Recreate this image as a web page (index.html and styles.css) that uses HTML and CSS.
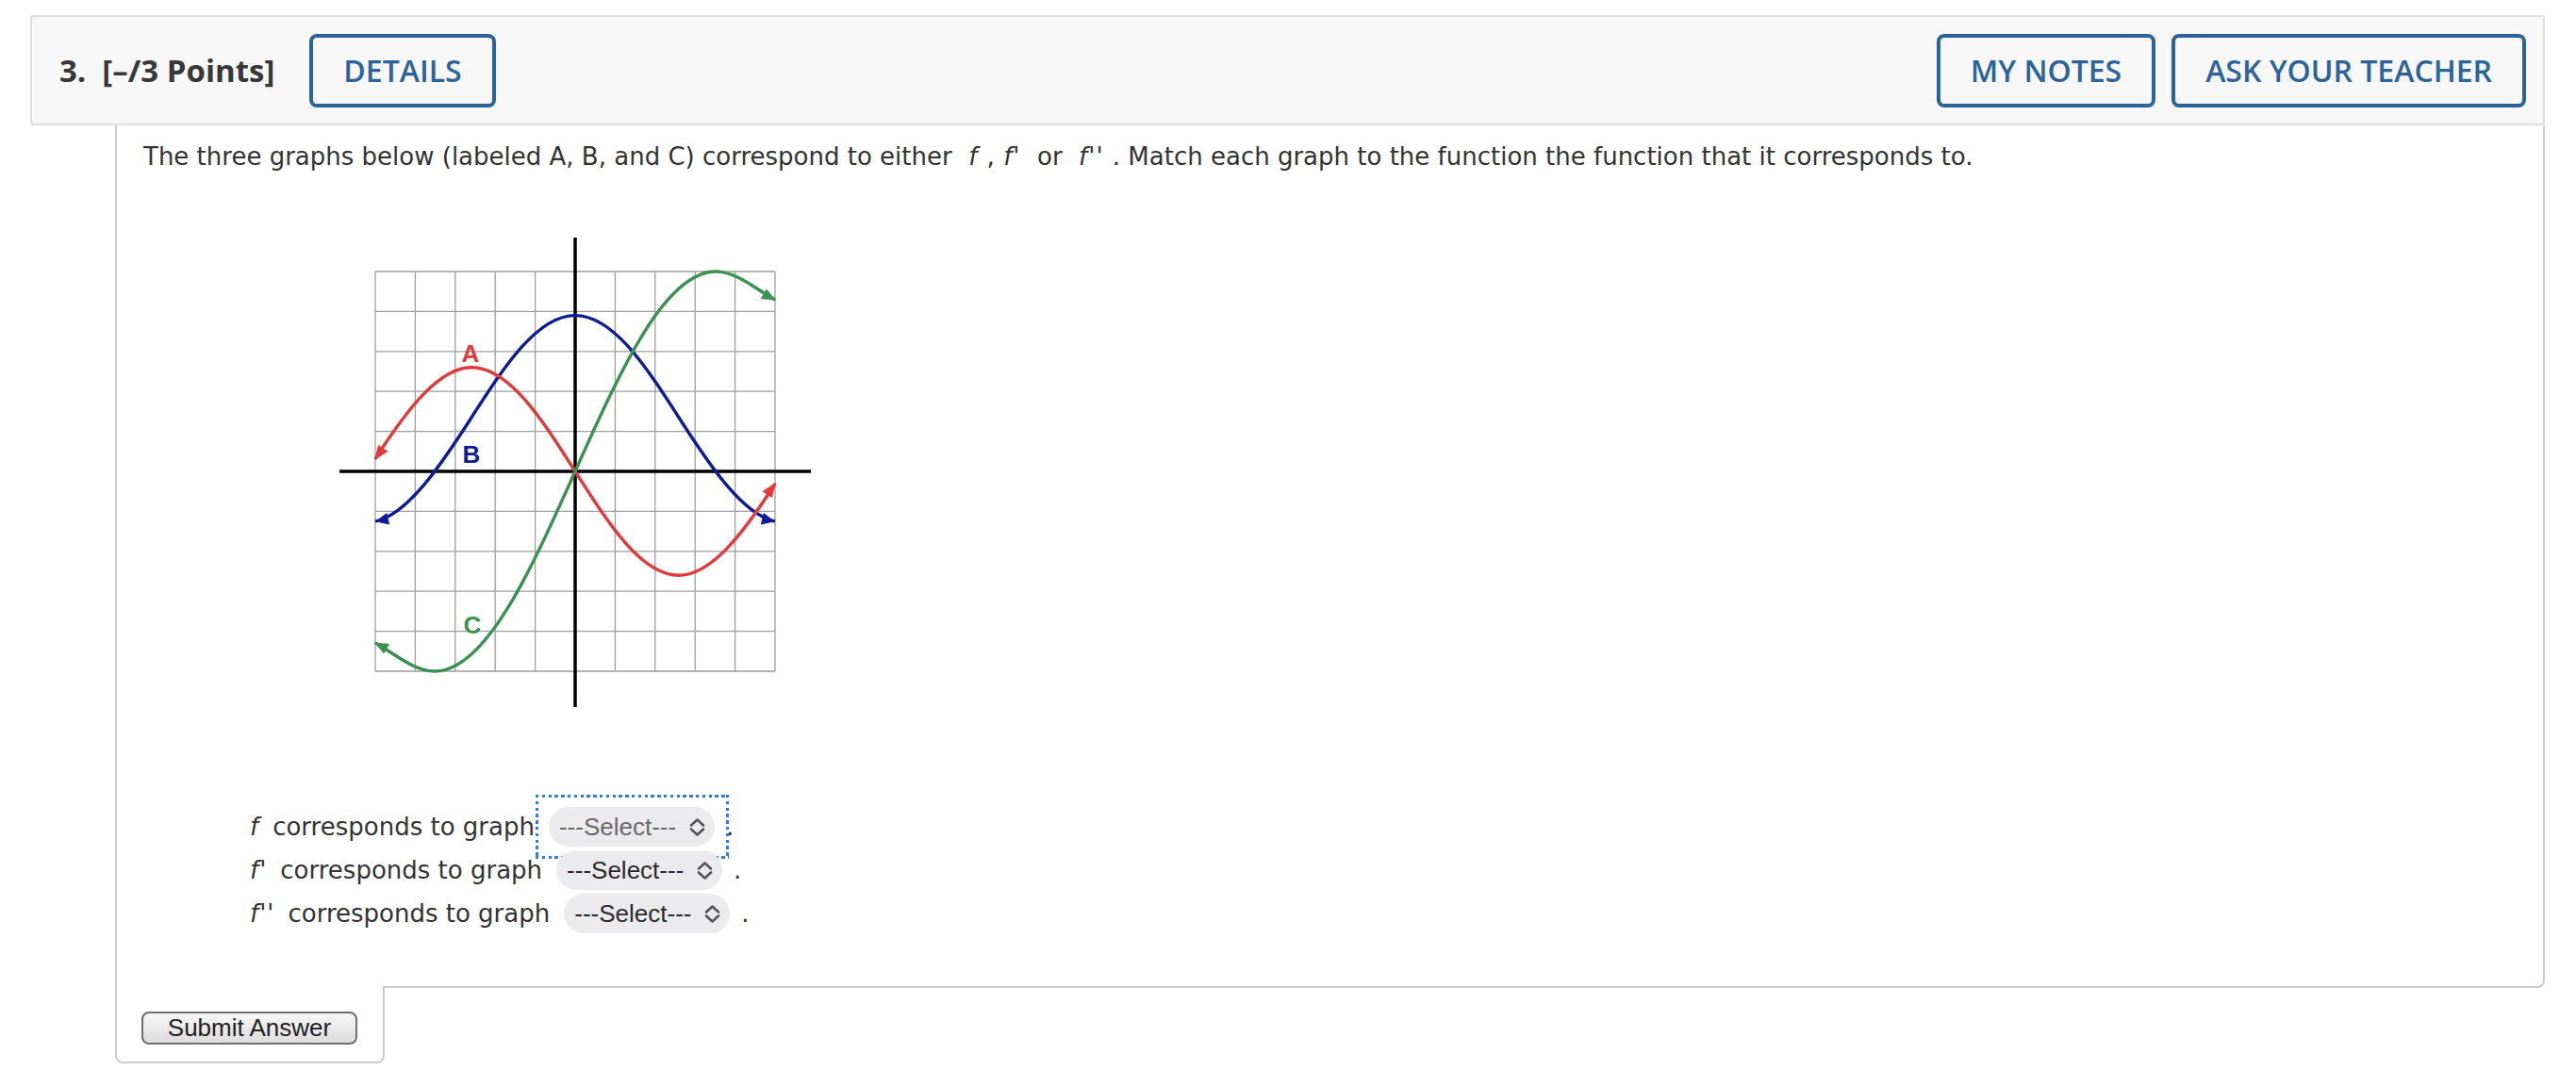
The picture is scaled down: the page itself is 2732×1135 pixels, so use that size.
FILE: index.html
```html
<!DOCTYPE html>
<html>
<head>
<meta charset="utf-8">
<link rel="stylesheet" href="styles.css">
</head>
<body>
<div class="page">
  <div class="qhead">
    <span class="qnum">3.</span>
    <span class="qpts">[–/3 Points]</span>
    <span class="hbtn details">DETAILS</span>
    <span class="hbtn push">MY NOTES</span>
    <span class="hbtn">ASK YOUR TEACHER</span>
  </div>
  <div class="qbody">
    <p class="qtext">The three graphs below (labeled A, B, and C) correspond to either&nbsp; <i class="m">f</i> , <i class="m">f'</i>&nbsp; or&nbsp; <i class="m">f''</i> . Match each graph to the function the function that it corresponds to.</p>
    <svg class="graph" width="520" height="520" viewBox="0 0 520 520">
      <path class="grid" d="M48 48V472M90.4 48V472M132.8 48V472M175.2 48V472M217.6 48V472M302.4 48V472M344.8 48V472M387.2 48V472M429.6 48V472M472 48V472M48 48H472M48 90.4H472M48 132.8H472M48 175.2H472M48 217.6H472M48 302.4H472M48 344.8H472M48 387.2H472M48 429.6H472M48 472H472"/>
      <path class="axis" d="M260 12V510M10 260H510"/>
      <g transform="translate(260 260) scale(42.4 -42.4)">
        <path class="curve blue" d="M-5 -1.254C-4.206 -1.080 -3.412 0.076 -2.618 1.31C-1.764 2.637 -0.948 3.9 0 3.9C0.948 3.9 1.764 2.637 2.618 1.31C3.412 0.076 4.206 -1.080 5 -1.254"/>
        <path class="curve red" d="M-5 0.313C-4.2 1.560 -3.4 2.6 -2.6 2.6C-1.659 2.6 -0.848 1.332 0 0C0.848 -1.332 1.659 -2.6 2.6 -2.6C3.4 -2.6 4.2 -1.560 5 -0.313"/>
        <path class="curve green" d="M-5 -4.29C-4.507 -4.573 -4.013 -5 -3.52 -5C-2.246 -5 -1.148 -2.561 0 0C1.148 2.561 2.246 5 3.52 5C4.013 5 4.507 4.573 5 4.29"/>
      </g>
      <polygon class="fblue" points="48,313.2 63.2,316.5 60.2,303.9"/>
      <polygon class="fblue" points="472,313.2 456.8,316.5 459.8,303.9"/>
      <polygon class="fred" points="47,248.2 61.5,238.8 51.2,232.0"/>
      <polygon class="fred" points="473,271.8 468.8,288.0 458.5,281.2"/>
      <polygon class="fgreen" points="473,78.6 456.8,77.0 462.8,66.4"/>
      <polygon class="fgreen" points="47,441.4 63.2,443.0 57.2,453.6"/>
      <text class="lbl fred" x="149" y="144">A</text>
      <text class="lbl fblue" x="150" y="251">B</text>
      <text class="lbl fgreen" x="151" y="432">C</text>
    </svg>
    <div class="answers">
      <div class="row">
        <i class="m">f</i><span>corresponds to graph</span>
        <span class="select focused"><span class="sel-text">---Select---</span><svg class="chev" width="17" height="21" viewBox="0 0 17 21"><path d="M2 8.5L8.5 2.5L15 8.5M2 12.5L8.5 18.5L15 12.5"/></svg></span>
        <span class="dot">.</span>
      </div>
      <div class="row">
        <i class="m">f'</i><span>corresponds to graph</span>
        <span class="select"><span class="sel-text">---Select---</span><svg class="chev" width="17" height="21" viewBox="0 0 17 21"><path d="M2 8.5L8.5 2.5L15 8.5M2 12.5L8.5 18.5L15 12.5"/></svg></span>
        <span class="dot">.</span>
      </div>
      <div class="row">
        <i class="m">f''</i><span>corresponds to graph</span>
        <span class="select"><span class="sel-text">---Select---</span><svg class="chev" width="17" height="21" viewBox="0 0 17 21"><path d="M2 8.5L8.5 2.5L15 8.5M2 12.5L8.5 18.5L15 12.5"/></svg></span>
        <span class="dot">.</span>
      </div>
    </div>
  </div>
  <div class="submit-tab">
    <button class="submit">Submit Answer</button>
  </div>
</div>
</body>
</html>
```

FILE: styles.css
```css
html, body {
  margin: 0;
  padding: 0;
  background: #ffffff;
}
.page {
  width: 2667px;
  padding: 16px 0 0 32px;
  font-family: "DejaVu Sans", Verdana, sans-serif;
  color: #333333;
}
.qhead {
  box-sizing: border-box;
  height: 117px;
  display: flex;
  align-items: center;
  background: #f7f7f7;
  border: 2px solid #dedede;
  border-radius: 4px;
  padding: 0 18px 0 29px;
  font-family: "Open Sans", sans-serif;
}
.qnum, .qpts {
  font-weight: 700;
  font-size: 33px;
  color: #383838;
}
.qnum {
  margin-right: 17px;
}
.hbtn {
  box-sizing: border-box;
  height: 78px;
  display: flex;
  align-items: center;
  padding: 0 32px;
  border: 4px solid #2c6398;
  border-radius: 8px;
  color: #2c6398;
  font-weight: 600;
  font-size: 32px;
}
.details {
  margin-left: 37px;
}
.push {
  margin-left: auto;
  margin-right: 17px;
}
.qbody {
  margin-left: 90px;
  border: 2px solid #cbcbcb;
  border-top: 0;
  border-radius: 0 0 8px 0;
  padding: 14px 28px 54px 28px;
}
.qtext {
  margin: 0;
  font-size: 26px;
  line-height: 39px;
}
.m {
  font-style: italic;
  letter-spacing: 1px;
}
.qtext .m {
  margin: 0 1px;
}
.graph {
  display: block;
  margin: 54px 0 0 198px;
}
.grid {
  fill: none;
  stroke: #9f9f9f;
  stroke-width: 1.3;
}
.axis {
  fill: none;
  stroke: #000000;
  stroke-width: 3.5;
}
.curve {
  fill: none;
  stroke-width: 3.4;
  vector-effect: non-scaling-stroke;
}
.red { stroke: #e03a3a; }
.blue { stroke: #0c1d96; }
.green { stroke: #3b9150; }
.fred { fill: #e03a3a; }
.fblue { fill: #0c1d96; }
.fgreen { fill: #3b9150; }
.lbl {
  font-family: "Liberation Sans", Arial, sans-serif;
  font-weight: 700;
  font-size: 26px;
  text-anchor: middle;
}
.answers {
  margin: 94px 0 0 113px;
}
.row {
  height: 46px;
  display: flex;
  align-items: center;
  font-size: 26px;
}
.row .m {
  margin-right: 14px;
}
.select {
  position: relative;
  box-sizing: border-box;
  width: 176px;
  height: 42px;
  margin-left: 15px;
  padding: 0 10px 0 11px;
  border-radius: 21px;
  background: #ebebed;
  display: flex;
  align-items: center;
  justify-content: space-between;
  font-family: "Liberation Sans", Arial, sans-serif;
  font-size: 26px;
  color: #2a2a2a;
}
.select.focused {
  color: #6a6a6a;
}
.select.focused::after {
  content: "";
  position: absolute;
  top: -13px;
  bottom: -13px;
  left: -14px;
  right: -15px;
  background:
    repeating-linear-gradient(90deg, #2f7ee0 0 3.4px, transparent 3.4px 6.8px) top left / 100% 3px no-repeat,
    repeating-linear-gradient(90deg, #2f7ee0 0 3.4px, transparent 3.4px 6.8px) bottom left / 100% 3px no-repeat,
    repeating-linear-gradient(180deg, #2f7ee0 0 3.4px, transparent 3.4px 6.8px) top left / 3px 100% no-repeat,
    repeating-linear-gradient(180deg, #2f7ee0 0 3.4px, transparent 3.4px 6.8px) top right / 3px 100% no-repeat;
}
.chev path {
  fill: none;
  stroke: #555555;
  stroke-width: 2.6;
  stroke-linecap: round;
  stroke-linejoin: round;
}
.dot {
  margin-left: 12px;
}
.submit-tab {
  position: relative;
  box-sizing: border-box;
  width: 286px;
  margin: -2px 0 0 90px;
  background: #ffffff;
  border: 2px solid #cbcbcb;
  border-top: 0;
  border-radius: 0 0 8px 8px;
  padding: 27px 0 18px 26px;
}
.submit {
  display: block;
  box-sizing: border-box;
  width: 229px;
  height: 35px;
  padding: 0;
  border: 2px solid #6f6f6f;
  border-radius: 8px;
  background: linear-gradient(#f7f7f7, #dcdcdc);
  font-family: "Liberation Sans", Arial, sans-serif;
  font-size: 26px;
  color: #222222;
}
```
